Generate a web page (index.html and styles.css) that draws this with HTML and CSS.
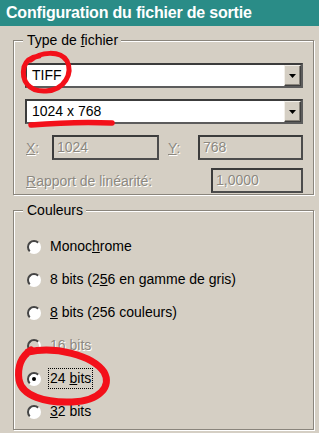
FILE: index.html
```html
<!DOCTYPE html>
<html lang="fr">
<head>
<meta charset="utf-8">
<title>Configuration du fichier de sortie</title>
<link rel="stylesheet" href="styles.css">
</head>
<body>
<div class="window">
  <div class="titlebar">Configuration du fichier de sortie</div>
  <div class="content">
    <div class="group group-type">
      <div class="legend">Type de <u>f</u>ichier</div>
      <div class="combo first">
        <span class="combo-text">TIFF</span>
        <span class="drop"><svg width="7" height="4" viewBox="0 0 7 4"><path d="M0 0H7L3.5 4Z" fill="#000"/></svg></span>
      </div>
      <div class="combo">
        <span class="combo-text">1024 x 768</span>
        <span class="drop"><svg width="7" height="4" viewBox="0 0 7 4"><path d="M0 0H7L3.5 4Z" fill="#000"/></svg></span>
      </div>
      <div class="row row-xy">
        <span class="lbl lbl-x dis"><u>X</u>:</span>
        <span class="field field-x dis">1024</span>
        <span class="lbl lbl-y dis"><u>Y</u>:</span>
        <span class="field field-y dis">768</span>
      </div>
      <div class="row row-ratio">
        <span class="lbl lbl-ratio dis"><u>R</u>apport de linéarité:</span>
        <span class="field field-ratio dis">1,0000</span>
      </div>
    </div>
    <div class="group group-colors">
      <div class="legend">Couleurs</div>
      <div class="radios">
        <div class="radio-row"><span class="radio"></span><span class="rlabel">Monoc<u>h</u>rome</span></div>
        <div class="radio-row"><span class="radio"></span><span class="rlabel">8 bits (2<u>5</u>6 en gamme de gris)</span></div>
        <div class="radio-row"><span class="radio"></span><span class="rlabel"><u>8</u> bits (256 couleurs)</span></div>
        <div class="radio-row"><span class="radio radio-dis"></span><span class="rlabel dis">1<u>6</u> bits</span></div>
        <div class="radio-row"><span class="radio checked"></span><span class="rlabel focus">24 <u>b</u>its</span></div>
        <div class="radio-row"><span class="radio"></span><span class="rlabel"><u>3</u>2 bits</span></div>
      </div>
    </div>
  </div>
  <svg class="annot" width="319" height="433" viewBox="0 0 319 433">
    <path d="M31 60 C40 52 60 50 67 61 C73 73 65 90 46 91 C29 92 21 81 24 67 C26 60 32 57 39 56" fill="none" stroke="#f3101a" stroke-width="5" stroke-linecap="round"/>
    <path d="M31 125 C55 123 90 122 112 123" fill="none" stroke="#f3101a" stroke-width="5.5" stroke-linecap="round"/>
    <path d="M28 352 C55 346 92 355 104 372 C112 386 100 401 72 402 C45 403 22 396 19 380 C17 366 22 356 31 350" fill="none" stroke="#f3101a" stroke-width="7" stroke-linecap="round"/>
  </svg>
</div>
</body>
</html>
```

FILE: styles.css
```css
html, body {
  margin: 0;
  padding: 0;
  background: #d5cfc4;
}
.window {
  position: relative;
  width: 319px;
  height: 433px;
  overflow: hidden;
  background: #d5cfc4;
  font-family: "Liberation Sans", Arial, sans-serif;
  font-size: 14px;
  color: #000;
}
.titlebar {
  height: 26px;
  line-height: 26px;
  padding-left: 6px;
  background: #2a8c87;
  color: #fff;
  font-weight: bold;
  font-size: 16px;
  letter-spacing: -0.2px;
  white-space: nowrap;
}
.content {
  padding: 14px 5px 0 13px;
}
.group {
  display: flex;
  flex-direction: column;
  border: 1px solid #8a857c;
  box-shadow: inset 1px 1px 0 #fff, 1px 1px 0 #fff;
  padding: 0 10px 1px 11px;
}
.group-colors {
  margin-top: 15px;
}
.legend {
  align-self: flex-start;
  margin: -9px 0 0 -2px;
  padding: 0 3px 0 4px;
  height: 16px;
  line-height: 16px;
  background: #d5cfc4;
  white-space: nowrap;
}
.combo {
  display: flex;
  align-items: stretch;
  height: 25px;
  box-sizing: border-box;
  margin-top: 11px;
  background: #fff;
  border: 2px solid;
  border-color: #3c3c3c #5c5c5c #5c5c5c #3c3c3c;
}
.combo.first {
  margin-top: 15px;
}
.combo-text {
  flex: 1;
  padding-left: 5px;
  line-height: 21px;
}
.drop {
  width: 17px;
  box-sizing: border-box;
  display: flex;
  align-items: center;
  justify-content: center;
  background: #d5cfc4;
  border: 1px solid;
  border-color: #f2efe9 #404040 #404040 #f2efe9;
  box-shadow: inset -1px -1px 0 #8a857c;
}
.row {
  display: flex;
  align-items: center;
}
.row-xy {
  margin-top: 11px;
}
.row-ratio {
  margin-top: 8px;
}
.field {
  height: 25px;
  box-sizing: border-box;
  border: 2px solid;
  border-color: #3c3c3c #4c4c4c #4c4c4c #3c3c3c;
  padding-left: 3px;
  line-height: 21px;
}
.lbl-x {
  width: 27px;
  padding-left: 1px;
  box-sizing: border-box;
}
.field-x {
  width: 107px;
}
.lbl-y {
  width: 30px;
  margin-left: 9px;
}
.field-y {
  flex: 1;
}
.lbl-ratio {
  flex: 1;
  padding-left: 1px;
}
.field-ratio {
  width: 92px;
}
.dis {
  color: #8c8880;
  text-shadow: 1px 1px 0 #fff;
}
.radios {
  margin-top: 12px;
  display: flex;
  flex-direction: column;
}
.radio-row {
  height: 33px;
  display: flex;
  align-items: center;
}
.radio {
  width: 14px;
  height: 14px;
  box-sizing: border-box;
  margin-left: 2px;
  border-radius: 50%;
  background: #fff;
  border: 2px solid;
  border-color: #444 #fff #fff #444;
  position: relative;
}
.radio-dis {
  background: #d5cfc4;
}
.checked::after {
  content: "";
  position: absolute;
  left: 3px;
  top: 3px;
  width: 4px;
  height: 4px;
  border-radius: 50%;
  background: #000;
}
.rlabel {
  margin-left: 7px;
  padding: 0 1px;
  border: 1px solid transparent;
  line-height: 19px;
  white-space: nowrap;
}
.focus {
  border: 1px dotted #000;
}
.annot {
  position: absolute;
  left: 0;
  top: 0;
  pointer-events: none;
}
```
